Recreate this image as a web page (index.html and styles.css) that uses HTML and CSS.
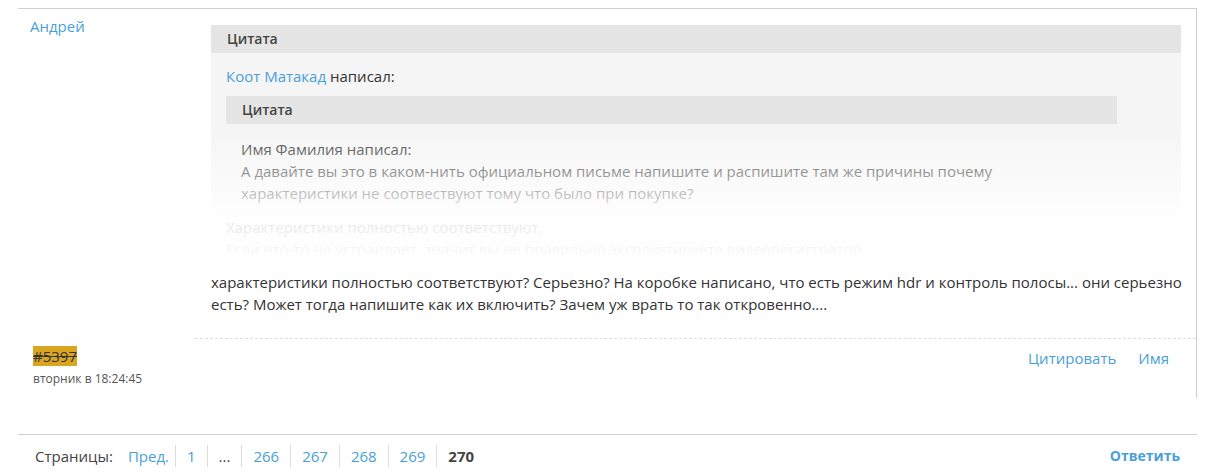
FILE: index.html
```html
<!DOCTYPE html>
<html lang="ru">
  <head>
    <meta charset="UTF-8" />
    <meta name="viewport" content="width=device-width, initial-scale=1.0" />
    <title>Форум</title>
    <link rel="stylesheet" href="styles.css">
  </head>
  <body>
    <div class="topic">
      <div class="post">
        <div class="post-author">
          <a href="#" class="author-link">Андрей</a>
        </div>
        <div class="post-body">
          <div class="quote">
            <div class="quote-title">Цитата</div>
            <div class="quote-content">
              <p><a href="#">Коот Матакад</a> написал:</p>
              <div class="quote quote-inner">
                <div class="quote-title">Цитата</div>
                <div class="quote-content">
                  <p>Имя Фамилия написал:<br>
                  А давайте вы это в каком-нить официальном письме напишите и распишите там же причины почему характеристики не соотвествуют тому что было при покупке?</p>
                </div>
              </div>
              <p>Характеристики полностью соответствуют.<br>
              Если что-то не устраивает, значит вы не правильно эксплуатируете видеорегистратор.</p>
            </div>
          </div>
          <p class="post-text">характеристики полностью соответствуют? Серьезно? На коробке написано, что есть режим hdr и контроль полосы... они серьезно есть? Может тогда напишите как их включить? Зачем уж врать то так откровенно....</p>
        </div>
        <div class="post-meta">
          <span class="post-number">#5397</span>
          <span class="post-date">вторник в 18:24:45</span>
        </div>
        <div class="post-actions">
          <a href="#">Цитировать</a>
          <a href="#">Имя</a>
        </div>
      </div>
    </div>

    <div class="pager">
      <div class="pages">
        <span class="pages-label">Страницы:</span>
        <a href="#" class="page prev">Пред.</a>
        <a href="#" class="page sep">1</a>
        <span class="page sep dots">...</span>
        <a href="#" class="page sep">266</a>
        <a href="#" class="page sep">267</a>
        <a href="#" class="page sep">268</a>
        <a href="#" class="page sep">269</a>
        <span class="page sep current">270</span>
      </div>
      <a href="#" class="reply-link">Ответить</a>
    </div>
  </body>
</html>
```

FILE: styles.css
```css
body {
  font-family: "Open Sans", "Noto Sans", sans-serif;
  font-size: 15px;
  line-height: 22px;
  color: #333;
  margin: 8px 23px 0 18px;
  background: #fff;
}
a {
  color: #4a9fd8;
  text-decoration: none;
}
p {
  margin: 0;
}
.topic {
  border-top: 1px solid #cfcfcf;
  border-right: 1px solid #cfcfcf;
}
.post {
  display: grid;
  grid-template-columns: 177px 1fr;
}
.post-author {
  padding: 6px 12px;
}
.post-body {
  padding: 16px 15px 23px 16px;
}
.quote {
  background: #f5f5f5;
}
.quote-title {
  background: #e5e5e5;
  font-size: 14px;
  font-weight: 600;
  color: #444;
  padding: 3px 16px;
}
.quote-content {
  padding: 12px 16px 8px 15px;
}
.post-body > .quote {
  position: relative;
  max-height: 229px;
  overflow: hidden;
}
.post-body > .quote::after {
  content: "";
  position: absolute;
  left: 0;
  right: 0;
  bottom: 0;
  height: 130px;
  background: linear-gradient(rgba(255, 255, 255, 0), rgba(255, 255, 255, 0.86) 68%, rgba(255, 255, 255, 0.96));
}
.quote-inner {
  margin: 9px 48px 4px 0;
}
.quote-inner .quote-content {
  padding: 14px 16px 8px 15px;
}
.post-text {
  margin: 17px -12px 0 0;
}
.post-meta {
  padding: 8px 15px 8px;
  display: flex;
  flex-direction: column;
  align-items: flex-start;
}
.post-number {
  background: #daa520;
  text-decoration: line-through;
  color: #333;
  line-height: 20px;
}
.post-date {
  font-size: 12px;
  color: #555;
  margin-top: 2px;
}
.post-actions {
  border-top: 1px dashed #ddd;
  display: flex;
  justify-content: flex-end;
  gap: 22px;
  padding: 8px 27px 0 0;
}
.pager {
  margin-top: 36px;
  border-top: 1px solid #cfcfcf;
  display: flex;
  justify-content: space-between;
  align-items: center;
  padding: 10px 17px 0;
}
.pages {
  display: flex;
  align-items: center;
}
.pages-label {
  color: #444;
  margin-right: 15px;
}
.page {
  padding: 0 11px;
  line-height: 22px;
}
.prev {
  padding: 0 6px 0 0;
}
.sep {
  border-left: 1px solid #ddd;
}
.dots {
  color: #444;
}
.current {
  font-weight: 700;
  color: #444;
}
.reply-link {
  font-weight: 700;
  font-size: 14px;
}
```
